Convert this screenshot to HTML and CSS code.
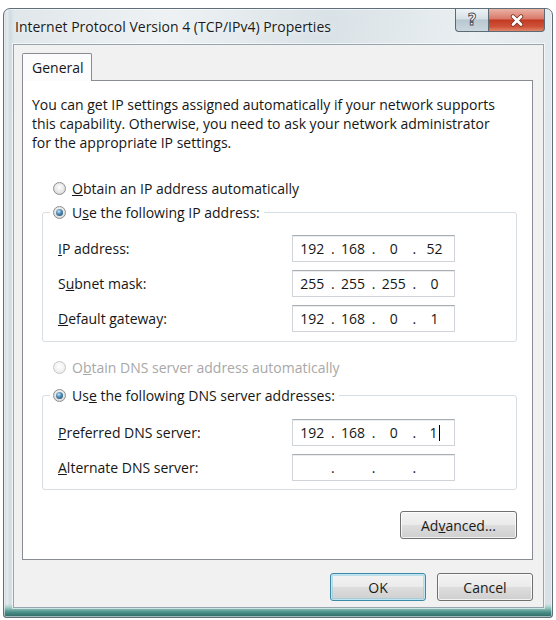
FILE: index.html
```html
<!DOCTYPE html>
<html>
<head>
<meta charset="utf-8">
<title>Internet Protocol Version 4 (TCP/IPv4) Properties</title>
<link rel="stylesheet" href="styles.css">
</head>
<body>
<div class="window">
  <div class="titlebar">
    <div class="title">Internet Protocol Version 4 (TCP/IPv4) Properties</div>
    <div class="caption-btns">
      <div class="cbtn help"><span class="qmark">?</span></div>
      <div class="cbtn close">
        <svg width="16" height="13" viewBox="0 0 16 13">
          <path d="M4 2.5 L12 10.5 M12 2.5 L4 10.5" stroke="#7a2d20" stroke-width="4.4" stroke-linecap="round" fill="none"/>
          <path d="M4 2.5 L12 10.5 M12 2.5 L4 10.5" stroke="#ffffff" stroke-width="2.8" stroke-linecap="round" fill="none"/>
        </svg>
      </div>
    </div>
  </div>
  <div class="client">
    <div class="tabs"><div class="tab">General</div></div>
    <div class="panel">
      <p class="intro">You can get IP settings assigned automatically if your network supports<br>this capability. Otherwise, you need to ask your network administrator<br>for the appropriate IP settings.</p>

      <div class="radio-row first"><span class="radio"></span><span><u>O</u>btain an IP address automatically</span></div>

      <fieldset class="group ip-group">
        <legend class="radio-row legend"><span class="radio on"></span><span>U<u>s</u>e the following IP address:</span></legend>
        <div class="field-row">
          <span class="label"><u>I</u>P address:</span>
          <div class="ipbox"><span>192</span><span>.</span><span>168</span><span>.</span><span>0</span><span>.</span><span>52</span></div>
        </div>
        <div class="field-row">
          <span class="label">S<u>u</u>bnet mask:</span>
          <div class="ipbox"><span>255</span><span>.</span><span>255</span><span>.</span><span>255</span><span>.</span><span>0</span></div>
        </div>
        <div class="field-row">
          <span class="label"><u>D</u>efault gateway:</span>
          <div class="ipbox"><span>192</span><span>.</span><span>168</span><span>.</span><span>0</span><span>.</span><span>1</span></div>
        </div>
      </fieldset>

      <div class="radio-row dns-auto disabled"><span class="radio off-disabled"></span><span>O<u>b</u>tain DNS server address automatically</span></div>

      <fieldset class="group dns-group">
        <legend class="radio-row legend"><span class="radio on"></span><span>Us<u>e</u> the following DNS server addresses:</span></legend>
        <div class="field-row">
          <span class="label"><u>P</u>referred DNS server:</span>
          <div class="ipbox"><span>192</span><span>.</span><span>168</span><span>.</span><span>0</span><span>.</span><span>1<i class="caret"></i></span></div>
        </div>
        <div class="field-row">
          <span class="label"><u>A</u>lternate DNS server:</span>
          <div class="ipbox"><span></span><span>.</span><span></span><span>.</span><span></span><span>.</span><span></span></div>
        </div>
      </fieldset>

      <div class="adv-row"><button class="btn adv">Ad<u>v</u>anced...</button></div>
    </div>
    <div class="dlg-btns">
      <button class="btn default">OK</button>
      <button class="btn">Cancel</button>
    </div>
  </div>
</div>
</body>
</html>
```
FILE: styles.css
```css
html, body {
  margin: 0;
  background: #ffffff;
}
body {
  padding: 8px 0 0 3px;
  font-family: "Open Sans", "Noto Sans", "DejaVu Sans", sans-serif;
  font-size: 14px;
  color: #161616;
}

.window {
  width: 550px;
  height: 610px;
  box-sizing: border-box;
  border: 1px solid #5f6e78;
  border-radius: 7px 7px 3px 3px;
  display: flex;
  flex-direction: column;
  background:
    linear-gradient(to bottom, rgba(0,0,0,0) calc(100% - 13px), #a9d2cb calc(100% - 10px), #4d918b calc(100% - 5px), #2c6764 100%),
    linear-gradient(90deg, #c4d2db 0, #e6ecef 3px, #cfdbe2 6px, rgba(0,0,0,0) 10px),
    linear-gradient(100deg, #dfe6ea 0%, #eef2f4 25%, #d9e2e7 50%, #eaeff1 72%, #d7e0e5 100%);
  box-shadow: inset 0 0 0 1px rgba(255,255,255,0.55);
}

.titlebar {
  height: 35px;
  display: flex;
  align-items: center;
  justify-content: space-between;
  padding: 0 7px 0 11px;
  flex: none;
}
.title {
  color: #1b1b1b;
  text-shadow: 0 0 6px rgba(255,255,255,0.9);
}
.caption-btns {
  align-self: flex-start;
  display: flex;
}
.cbtn {
  height: 23px;
  box-sizing: border-box;
  border: 1px solid #5b6a74;
  border-top: none;
  display: flex;
  align-items: center;
  justify-content: center;
}
.help {
  width: 33px;
  border-right: none;
  border-radius: 0 0 0 4px;
  background: linear-gradient(#eef3f6 0%, #d6e0e6 45%, #b8c7d0 50%, #c9d6dd 100%);
}
.qmark {
  font-family: "DejaVu Sans", sans-serif;
  font-weight: bold;
  font-size: 15px;
  color: #ffffff;
  -webkit-text-stroke: 0.9px #3c4a55;
  line-height: 1;
}
.close {
  width: 57px;
  border-radius: 0 0 4px 0;
  background: linear-gradient(#eab2a4 0%, #d9796a 45%, #c23a22 50%, #cf5238 80%, #e08668 100%);
}

.client {
  flex: 1;
  margin: 0 8px 9px 9px;
  box-sizing: border-box;
  border: 1px solid #97a5ae;
  background: #f1f1f1;
  padding: 8px 10px 0 8px;
  display: flex;
  flex-direction: column;
  box-shadow: 0 0 0 1px rgba(255,255,255,0.6);
}

.tabs {
  display: flex;
  position: relative;
  z-index: 1;
}
.tab {
  width: 70px;
  height: 28px;
  box-sizing: border-box;
  border: 1px solid #898c95;
  border-bottom: none;
  border-radius: 2px 2px 0 0;
  background: #fcfcfc;
  padding: 4px 0 0 9px;
  margin-bottom: -1px;
}

.panel {
  height: 480px;
  box-sizing: border-box;
  border: 1px solid #898c95;
  background: #ffffff;
  display: flex;
  flex-direction: column;
}

.intro {
  margin: 14px 0 0 9px;
  line-height: 19px;
  white-space: nowrap;
}

.radio-row {
  display: flex;
  align-items: center;
  gap: 6px;
  height: 20px;
  white-space: nowrap;
}
.radio-row.first {
  margin: 26px 0 0 30px;
}
.radio {
  width: 13px;
  height: 13px;
  flex: none;
  box-sizing: border-box;
  border-radius: 50%;
  border: 1px solid #8e8e8e;
  background: radial-gradient(circle at 50% 40%, #ffffff 0%, #e6e6e6 55%, #cdcdcd 100%);
  position: relative;
}
.radio.on::after {
  content: "";
  position: absolute;
  left: 2px;
  top: 2px;
  width: 7px;
  height: 7px;
  border-radius: 50%;
  background: radial-gradient(circle at 40% 35%, #bfe4f8 0%, #4b86b0 45%, #173f60 100%);
}
.radio.off-disabled {
  border-color: #c6c6c6;
  background: radial-gradient(circle at 50% 40%, #ffffff 0%, #f0f0f0 60%, #e2e2e2 100%);
}
.disabled {
  color: #a8a8a8;
}

.group {
  margin: 4px 15px 0 19px;
  border: 1px solid #d6dde3;
  border-radius: 3px;
  padding: 13px 61px 9px 15px;
  display: flex;
  flex-direction: column;
  gap: 8px;
}
.legend {
  padding: 0 4px 0 3px;
  margin-left: -8px;
}
.dns-group {
  margin-top: 8px;
  padding-top: 14px;
  padding-bottom: 8px;
}
.dns-auto {
  margin: 15px 0 0 30px;
}

.field-row {
  display: flex;
  align-items: center;
  justify-content: space-between;
  height: 27px;
}
.ipbox {
  width: 163px;
  height: 27px;
  box-sizing: border-box;
  border: 1px solid #d0d4d9;
  border-top-color: #a8aeb5;
  box-shadow: inset 0 1px 0 #ececec;
  background: #ffffff;
  display: grid;
  grid-template-columns: 1fr 6px 1fr 6px 1fr 6px 1fr;
  align-items: center;
  padding: 0 2px;
  text-align: center;
}
.caret {
  display: inline-block;
  width: 1px;
  height: 16px;
  background: #000;
  vertical-align: -3px;
  margin-left: 1px;
}

.adv-row {
  display: flex;
  justify-content: flex-end;
  margin: 21px 15px 0 0;
}

.btn {
  font: inherit;
  color: #1b1b1b;
  height: 28px;
  box-sizing: border-box;
  border: 1px solid #707070;
  border-radius: 3px;
  background: linear-gradient(#f3f3f3 0%, #ebebeb 48%, #dddddd 52%, #cfcfcf 100%);
  box-shadow: inset 0 0 0 1px rgba(255,255,255,0.75);
  padding: 0;
}
.adv {
  width: 117px;
}
.dlg-btns {
  display: flex;
  justify-content: flex-end;
  gap: 11px;
  margin-top: 13px;
}
.dlg-btns .btn {
  width: 96px;
}
.btn.default {
  border-color: #3d8aa6;
  box-shadow: inset 0 0 0 1px #bfe5f2, inset 0 0 0 2px rgba(120,200,225,0.45);
}
```
